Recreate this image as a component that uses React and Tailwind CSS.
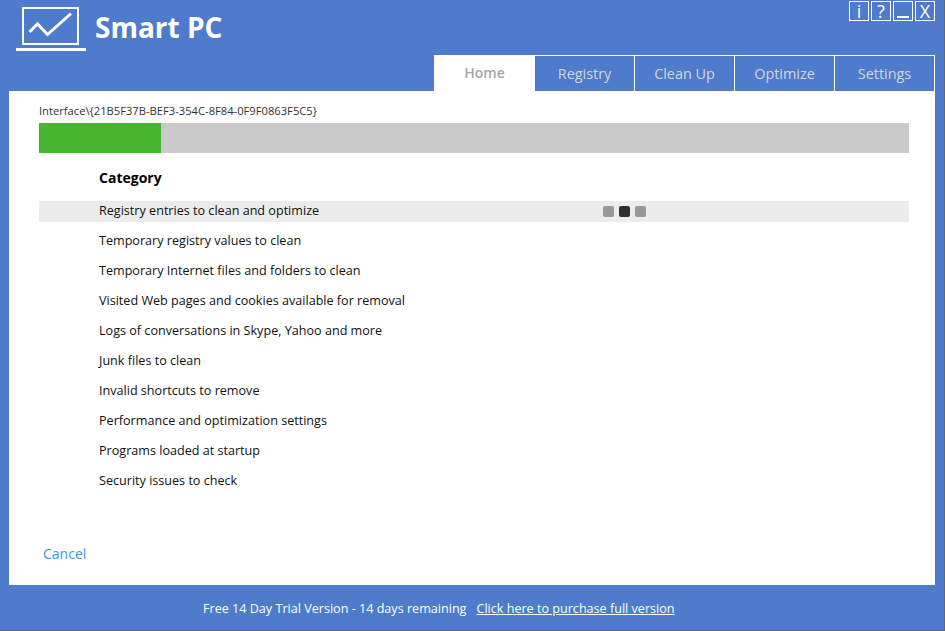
const tabs = ["Registry", "Clean Up", "Optimize", "Settings"];

const categories = [
  "Registry entries to clean and optimize",
  "Temporary registry values to clean",
  "Temporary Internet files and folders to clean",
  "Visited Web pages and cookies available for removal",
  "Logs of conversations in Skype, Yahoo and more",
  "Junk files to clean",
  "Invalid shortcuts to remove",
  "Performance and optimization settings",
  "Programs loaded at startup",
  "Security issues to check",
];

const App = () => {
  return (
    <div className="w-[945px] h-[631px] bg-[#666666] font-['Open_Sans',sans-serif] overflow-hidden">
      <div className="w-[944px] h-[630px] bg-[#4e7bcb] flex flex-col">
        {/* HEADER */}
        <div className="h-[91px] relative flex flex-col justify-end">
          <div className="absolute left-[16px] top-[7px]">
            <svg width="70" height="45" viewBox="0 0 70 45" fill="none" stroke="white" className="block">
              <path d="M7 1h55v36H7z" strokeWidth="2" />
              <path d="M0 42.5h70" strokeWidth="3" />
              <path d="M13.5 25l8-8 10 10.500 23.500-21" strokeWidth="3" />
            </svg>
          </div>
          <h1 className="absolute left-[95px] top-[8px] text-[28px] leading-[38px] font-bold text-white">Smart PC</h1>

          <div className="absolute left-[849px] top-[1px] flex gap-[2px]">
            {["i", "?"].map((b) => (
              <div
                key={b}
                className="w-[20px] h-[20px] border border-white text-white text-[18px] leading-[18px] flex items-center justify-center"
              >
                {b}
              </div>
            ))}
            <div className="w-[20px] h-[20px] border border-white flex items-end justify-center pb-[2px]">
              <div className="w-[12px] h-[2px] bg-white" />
            </div>
            <div className="w-[20px] h-[20px] border border-white text-white text-[18px] leading-[18px] flex items-center justify-center">
              X
            </div>
          </div>

          <div className="flex h-[36px] ml-[434px] mr-[9px]">
            <div className="w-[101px] bg-white text-[#a6a6a6] font-semibold text-[14px] flex items-center justify-center pb-[2px]">
              Home
            </div>
            {tabs.map((t) => (
              <div
                key={t}
                className="flex-1 border-t border-r border-white text-[#d6d6d6] text-[14.4px] flex items-center justify-center"
              >
                {t}
              </div>
            ))}
          </div>
        </div>

        {/* PANEL */}
        <div className="mx-[9px] h-[494px] w-[926px] bg-white flex flex-col pl-[30px] pr-[26px] pt-[11px]">
          <p className="text-[11.2px] leading-[17px] text-[#333333]">
            Interface\{"{"}21B5F37B-BEF3-354C-8F84-0F9F0863F5C5{"}"}
          </p>
          <div className="h-[30px] mt-[4px] bg-[#cacaca]">
            <div className="h-full w-[122px] bg-[#47b52f]" />
          </div>

          <h2 className="mt-[15px] ml-[60px] text-[14px] leading-[20px] font-bold text-black">Category</h2>

          <div className="mt-[13px] flex flex-col gap-[9px]">
            {categories.map((c, i) => (
              <div
                key={c}
                className={`relative h-[21px] pl-[60px] text-[12.6px] leading-[20px] text-[#111111] ${
                  i === 0 ? "bg-[#ececec]" : ""
                }`}
              >
                {c}
                {i === 0 && (
                  <div className="absolute left-[564px] top-[5px] flex gap-[5px]">
                    <span className="w-[11px] h-[11px] rounded-[2px] bg-[#999999]" />
                    <span className="w-[11px] h-[11px] rounded-[2px] bg-[#2f2f2f]" />
                    <span className="w-[11px] h-[11px] rounded-[2px] bg-[#999999]" />
                  </div>
                )}
              </div>
            ))}
          </div>

          <a className="mt-[52px] ml-[4px] text-[14px] leading-[20px] text-[#3a9ad9]">Cancel</a>
        </div>

        {/* FOOTER */}
        <div className="flex-1 flex items-center pl-[203px] pt-[4px] text-[12.6px] text-white">
          <span>Free 14 Day Trial Version - 14 days remaining</span>
          <a className="ml-[10px] underline">Click here to purchase full version</a>
        </div>
      </div>
    </div>
  );
};

export default App;
